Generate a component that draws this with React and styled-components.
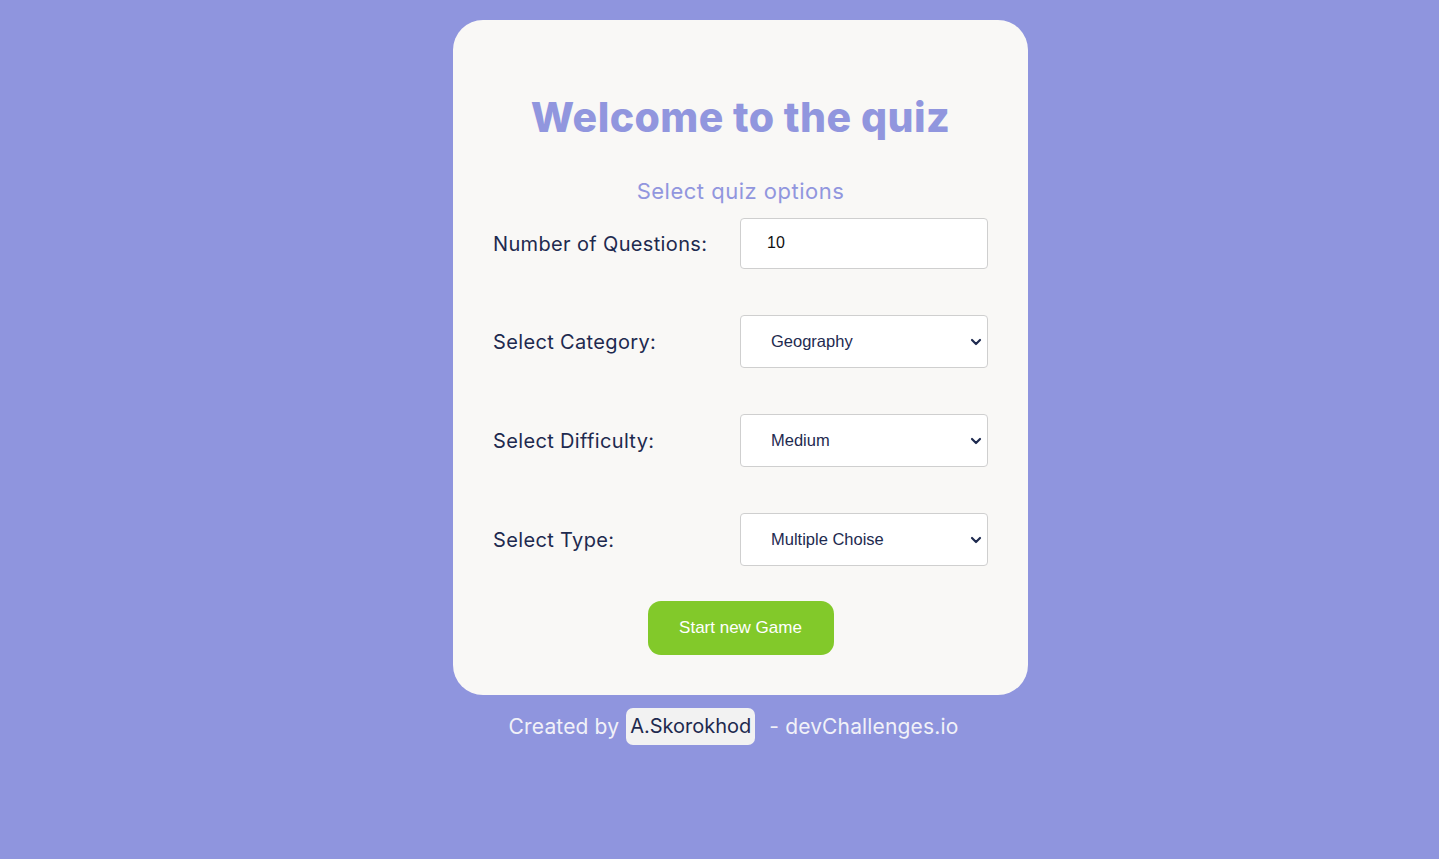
import React from "react";
import styled, { createGlobalStyle } from "styled-components";
import { ChevronDown } from "lucide-react";

const Global = createGlobalStyle`
  html, body { margin: 0; padding: 0; }
  body {
    background: #8f95de;
    font-family: "Inter", "Noto Sans", sans-serif;
    min-height: 859px;
  }
`;

const Page = styled.div`
  display: flex;
  flex-direction: column;
  align-items: center;
  padding: 20px 0 0 42px;
`;

const Card = styled.main`
  width: 575px;
  box-sizing: border-box;
  background: #f9f8f6;
  border-radius: 30px;
  padding: 72px 40px 40px;
  display: flex;
  flex-direction: column;
  align-items: center;
`;

const Title = styled.h1`
  margin: 0;
  font-family: "Inter", sans-serif;
  font-weight: 800;
  font-size: 41px;
  line-height: 50px;
  letter-spacing: 0.4px;
  color: #9196de;
`;

const Subtitle = styled.h2`
  margin: 36px 0 0;
  font-weight: 400;
  font-size: 22px;
  line-height: 27px;
  letter-spacing: 0.5px;
  color: #9196de;
`;

const Form = styled.div`
  width: 100%;
  display: flex;
  flex-direction: column;
  gap: 46px;
  margin-top: 13px;
`;

const Row = styled.label`
  display: grid;
  grid-template-columns: 247px 248px;
  align-items: center;
`;

const LabelText = styled.span`
  font-size: 20px;
  color: #1e2a4f;
  letter-spacing: 0.35px;
  padding-top: 1px;
`;

const Field = styled.div`
  position: relative;
  height: ${(p) => p.$h}px;
`;

const TextInput = styled.input`
  box-sizing: border-box;
  width: 100%;
  height: 100%;
  border: 1px solid #cfcfcf;
  border-radius: 4px;
  background: #fff;
  padding: 0 0 2px 26px;
  font-family: "Liberation Sans", Arial, sans-serif;
  font-size: 16px;
  color: #111;
  outline: none;
`;

const Select = styled.select`
  box-sizing: border-box;
  width: 100%;
  height: 100%;
  appearance: none;
  border: 1px solid #cfcfcf;
  border-radius: 4px;
  background: #fff;
  padding: 0 0 2px 30px;
  font-family: "Liberation Sans", Arial, sans-serif;
  font-size: 16.5px;
  color: #1e2a4f;
  outline: none;
`;

const Chevron = styled(ChevronDown)`
  position: absolute;
  right: 4px;
  top: 50%;
  transform: translateY(-50%);
  pointer-events: none;
  color: #1e2a4f;
`;

const StartButton = styled.button`
  margin-top: 35px;
  width: 186px;
  height: 54px;
  border: none;
  border-radius: 13px;
  background: #82c92a;
  color: #fff;
  font-family: "Liberation Sans", Arial, sans-serif;
  font-size: 17px;
  cursor: pointer;
`;

const Footer = styled.footer`
  margin: 13px 14px 0 0;
  display: flex;
  align-items: center;
  font-size: 21px;
  letter-spacing: 0.15px;
  color: #f1f1f8;
`;

const Author = styled.span`
  margin: 0 14px 0 7px;
  padding: 0 4px;
  height: 37px;
  line-height: 37px;
  font-size: 20px;
  letter-spacing: 0;
  background: #f2f2f2;
  border-radius: 7px;
  color: #1e2a4f;
`;

function SelectField({ options }) {
  return (
    <Field $h={53}>
      <Select defaultValue={options[0]}>
        {options.map((o) => (
          <option key={o}>{o}</option>
        ))}
      </Select>
      <Chevron size={16} strokeWidth={3.2} />
    </Field>
  );
}

export default function App() {
  return (
    <Page>
      <Global />
      <Card>
        <Title>Welcome to the quiz</Title>
        <Subtitle>Select quiz options</Subtitle>
        <Form>
          <Row>
            <LabelText>Number of Questions:</LabelText>
            <Field $h={51}>
              <TextInput type="number" defaultValue="10" />
            </Field>
          </Row>
          <Row>
            <LabelText>Select Category:</LabelText>
            <SelectField options={["Geography", "History", "Science"]} />
          </Row>
          <Row>
            <LabelText>Select Difficulty:</LabelText>
            <SelectField options={["Medium", "Easy", "Hard"]} />
          </Row>
          <Row>
            <LabelText>Select Type:</LabelText>
            <SelectField options={["Multiple Choise", "True / False"]} />
          </Row>
        </Form>
        <StartButton>Start new Game</StartButton>
      </Card>
      <Footer>
        Created by <Author>A.Skorokhod</Author> - devChallenges.io
      </Footer>
    </Page>
  );
}
